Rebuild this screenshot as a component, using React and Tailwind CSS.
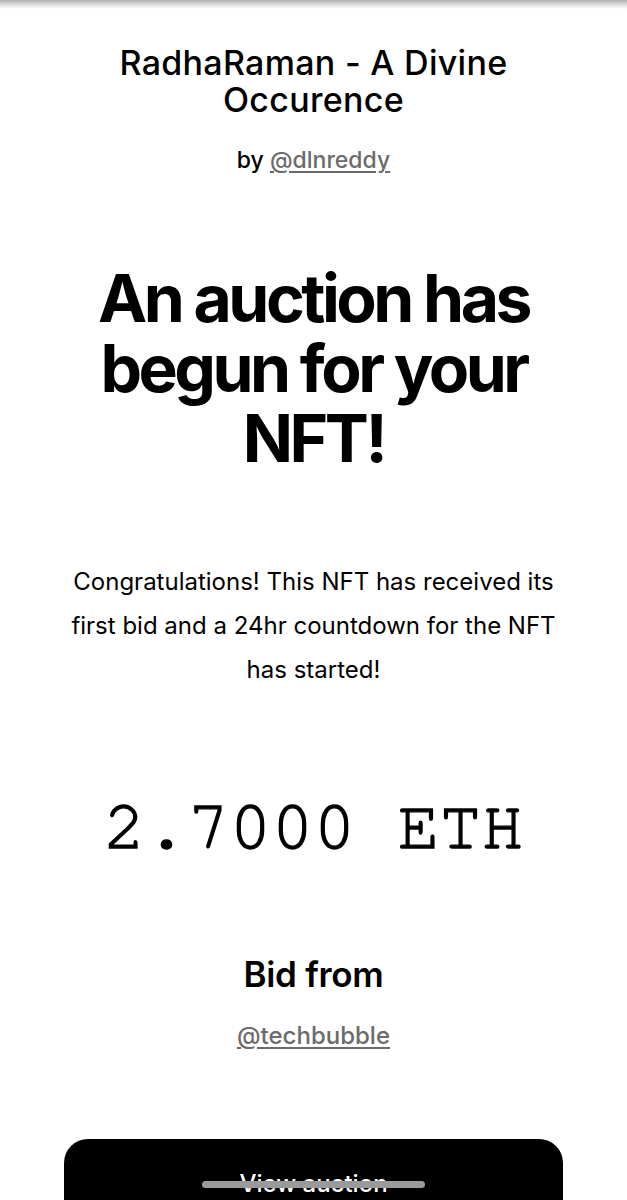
export default function App() {
  return (
    <div className="relative h-[1200px] overflow-hidden bg-white text-black" style={{ fontFamily: 'Inter, "Noto Sans", sans-serif' }}>
      <div className="h-[9px] w-full bg-gradient-to-b from-[#b0b0b0] via-[#dcdcdc] to-white" />
      <div className="flex flex-col items-center text-center">
        <h1 className="mt-[35px] w-[440px] text-[34px] font-medium leading-[37px] tracking-[0.3px]">
          RadhaRaman - A Divine Occurence
        </h1>
        <p className="mt-[29px] text-[23px] font-medium leading-[26px]">
          by <a className="text-[#6b6b6b] underline underline-offset-[3px] decoration-[1.5px]" href="#">@dlnreddy</a>
        </p>
        <h2 className="mt-[90px] w-[470px] text-[66px] font-bold leading-[70px] tracking-[-3.5px]">
          An auction has begun for your NFT!
        </h2>
        <p className="mt-[87px] w-[505px] text-[24px] leading-[44px]">
          Congratulations! This NFT has received its first bid and a 24hr countdown for the NFT has started!
        </p>
        <div
          className="mt-[95px] text-[70px] leading-[80px] [-webkit-text-stroke:1.3px_black]"
          style={{ fontFamily: '"Nimbus Mono PS", "Nimbus Mono L", FreeMono, "Courier 10 Pitch", Courier, "Liberation Mono", monospace' }}
        >
          2.7000 ETH
        </div>
        <h3 className="mt-[87px] text-[35px] font-semibold leading-[40px] tracking-[-0.3px]">
          Bid from
        </h3>
        <a className="mt-[29px] text-[24px] font-medium leading-[26px] text-[#6b6b6b] underline underline-offset-[3px] decoration-[1.5px]" href="#">
          @techbubble
        </a>
        <button className="mt-[90px] flex h-[90px] w-[499px] items-center justify-center rounded-[24px] bg-black text-[24px] font-medium text-white">
          View auction
        </button>
      </div>
      <div className="absolute bottom-[12px] left-[202px] h-[7px] w-[223px] rounded-full bg-[#9a9a9a]" />
    </div>
  );
}
